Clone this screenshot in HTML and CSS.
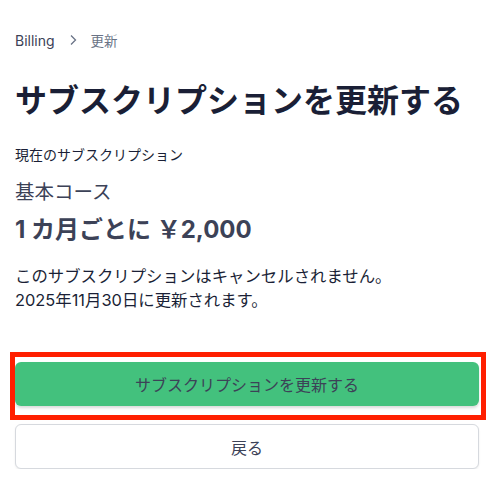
FILE: index.html
```html
<!DOCTYPE html>
<html lang="ja">

<head>
  <meta charset="UTF-8" />
  <meta name="viewport" content="width=device-width, initial-scale=1.0" />
  <title>サブスクリプションを更新する</title>
  <link rel="stylesheet" href="styles.css">
</head>

<body>
  <div class="page">
    <nav class="breadcrumb">
      <span class="crumb">Billing</span>
      <svg class="chevron" width="12" height="12" viewBox="0 0 12 12">
        <path d="M4 1.5 L8.5 6 L4 10.5" fill="none" stroke="currentColor" stroke-width="1.3" />
      </svg>
      <span class="crumb current">更新</span>
    </nav>

    <h1 class="title">サブスクリプションを更新する</h1>

    <div class="label">現在のサブスクリプション</div>
    <div class="plan">基本コース</div>
    <div class="price">1 カ月ごとに ￥2,000</div>

    <p class="note">
      このサブスクリプションはキャンセルされません。<br>
      2025年11月30日に更新されます。
    </p>

    <div class="actions">
      <div class="highlight">
        <button class="btn primary">サブスクリプションを更新する</button>
      </div>
      <button class="btn secondary">戻る</button>
    </div>
  </div>
</body>

</html>
```

FILE: styles.css
```css
* {
  box-sizing: border-box;
  margin: 0;
  padding: 0;
}

body {
  font-family: Inter, "Noto Sans CJK JP", sans-serif;
  background-color: #fff;
  color: #30313d;
}

.page {
  padding: 28px 21px 0 15px;
}

.breadcrumb {
  display: flex;
  align-items: center;
  gap: 11px;
  height: 24px;
  font-size: 14px;
  color: #3c4257;
}

.breadcrumb .chevron {
  color: #697386;
  margin: 0 1px;
}

.breadcrumb .current {
  font-size: 13.5px;
  color: #697386;
}

.title {
  margin-top: 29px;
  font-size: 32px;
  line-height: 40px;
  font-weight: 700;
  color: #1a1f36;
  white-space: nowrap;
}

.label {
  margin-top: 24px;
  font-size: 14px;
  line-height: 20px;
  color: #1a1f36;
}

.plan {
  margin-top: 14px;
  font-size: 19.5px;
  line-height: 26px;
  color: #3c4257;
}

.price {
  margin-top: 10px;
  font-size: 24px;
  line-height: 30px;
  font-weight: 700;
  color: #3c4257;
}

.note {
  margin-top: 19px;
  font-size: 16.4px;
  line-height: 24px;
  color: #1a1f36;
}

.actions {
  margin-top: 50px;
  display: flex;
  flex-direction: column;
  gap: 18px;
}

.highlight {
  position: relative;
}

/* annotation box drawn over the main button */
.highlight::after {
  content: "";
  position: absolute;
  top: -10px;
  left: -5px;
  right: -7px;
  bottom: -14px;
  border: 5px solid #ff1f00;
  pointer-events: none;
}

.btn {
  display: block;
  width: 100%;
  height: 44px;
  border-radius: 6px;
  font-family: Inter, "Noto Sans CJK JP", sans-serif;
  font-size: 16px;
  color: #3c4257;
  cursor: pointer;
}

.btn.primary {
  background-color: #43c17d;
  border: none;
  box-shadow: 0 2px 3px rgba(0, 0, 0, 0.15);
}

.btn.secondary {
  height: 45px;
  background-color: #fff;
  border: 1px solid #d6d9de;
  box-shadow: 0 1px 2px rgba(0, 0, 0, 0.08);
}
```
